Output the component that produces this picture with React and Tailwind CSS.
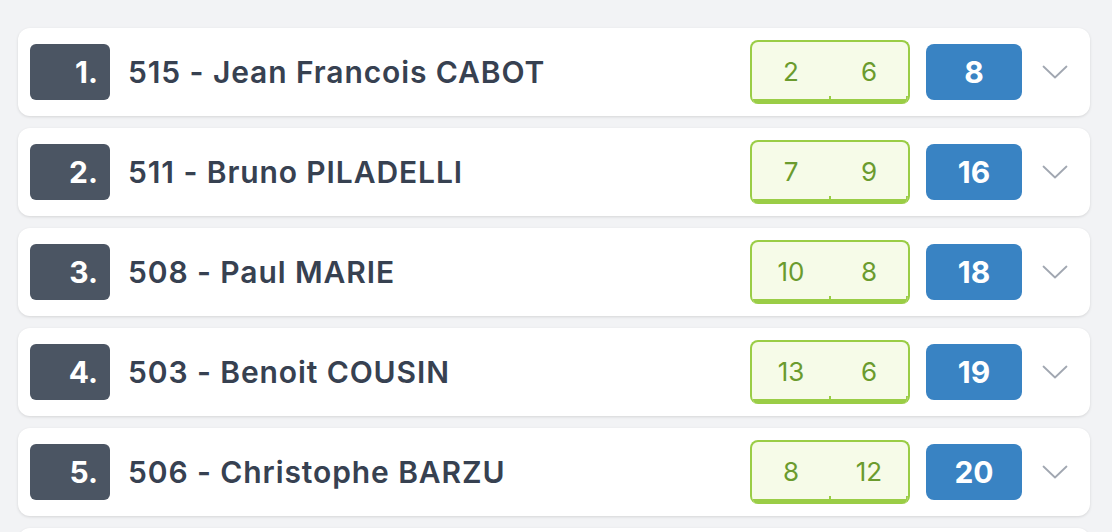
import React from "react";

const rows = [
  { rank: 1, name: "515 - Jean Francois CABOT", a: 2, b: 6, total: 8 },
  { rank: 2, name: "511 - Bruno PILADELLI", a: 7, b: 9, total: 16 },
  { rank: 3, name: "508 - Paul MARIE", a: 10, b: 8, total: 18 },
  { rank: 4, name: "503 - Benoit COUSIN", a: 13, b: 6, total: 19 },
  { rank: 5, name: "506 - Christophe BARZU", a: 8, b: 12, total: 20 },
];

function Chevron() {
  return (
    <svg width="26" height="15" viewBox="0 0 26 15" fill="none">
      <polyline points="1.5,1.5 13,12.5 24.5,1.5" stroke="#a1a7b1" strokeWidth="1.8" strokeLinecap="round" strokeLinejoin="round" />
    </svg>
  );
}

function Row({ r }) {
  return (
    <div className="flex h-[88px] shrink-0 items-center rounded-xl bg-white pl-3 pr-[22px] shadow-[0_1px_3px_rgba(0,0,0,0.12)]">
      <div className="flex h-14 w-20 items-center justify-end rounded-md bg-[#4b5563] pr-3 text-[30px] font-bold text-white">
        {r.rank}.
      </div>
      <div className="ml-[18px] flex-1 text-[30px] font-semibold tracking-[0.03em] text-[#374151]">{r.name}</div>
      <div className="relative flex h-16 w-40 overflow-hidden rounded-lg border-2 border-b-0 border-[#9acd46] bg-[#f6fbe8]">
        <div className="flex flex-1 items-center justify-center pb-[3px] text-[26px] text-[#6b9b2e]">{r.a}</div>
        <div className="flex flex-1 items-center justify-center pb-[3px] text-[26px] text-[#6b9b2e]">{r.b}</div>
        <div className="absolute bottom-0 left-0 right-0 h-[5px] bg-[#9acd46]" />
        <div className="absolute bottom-[5px] left-[77px] h-[3px] w-[2px] bg-[#9acd46]" />
        <div className="absolute bottom-[5px] right-0 h-[3px] w-[2px] bg-[#9acd46]" />
      </div>
      <div className="ml-4 flex h-14 w-24 items-center justify-center rounded-lg bg-[#3983c3] text-[30px] font-bold text-white">
        {r.total}
      </div>
      <div className="ml-[20px] flex w-[26px] items-center justify-center">
        <Chevron />
      </div>
    </div>
  );
}

export default function App() {
  return (
    <div
      className="flex h-[532px] flex-col gap-3 overflow-hidden bg-[#f2f3f5] pl-[18px] pr-[22px] pt-7"
      style={{ fontFamily: "Inter, 'Noto Sans', sans-serif" }}
    >
      {rows.map((r) => (
        <Row key={r.rank} r={r} />
      ))}
      <div className="h-[88px] shrink-0 rounded-xl bg-white shadow-[0_1px_3px_rgba(0,0,0,0.12)]" />
    </div>
  );
}
